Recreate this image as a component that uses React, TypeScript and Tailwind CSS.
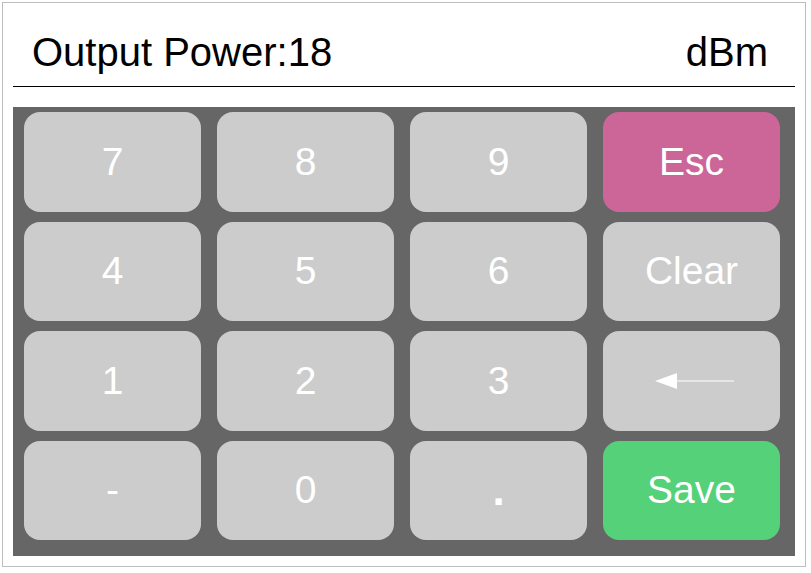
const keys: { label: string; tone?: 'esc' | 'save' | 'back' }[] = [
    { label: '7' },
    { label: '8' },
    { label: '9' },
    { label: 'Esc', tone: 'esc' },
    { label: '4' },
    { label: '5' },
    { label: '6' },
    { label: 'Clear' },
    { label: '1' },
    { label: '2' },
    { label: '3' },
    { label: '', tone: 'back' },
    { label: '-' },
    { label: '0' },
    { label: '.' },
    { label: 'Save', tone: 'save' },
];

const BackArrow = () => (
    <svg width="80" height="18" viewBox="0 0 80 18" className="ml-[6px]">
        <polygon points="0,9 22,1 22,17" fill="#ffffff" />
        <line x1="22" y1="9" x2="79" y2="9" stroke="#ffffff" strokeWidth="1.2" />
    </svg>
);

const App = () => {
    return (
        <div className="w-[811px] h-[573px] bg-white pl-[2px] pt-[2px] font-['Liberation_Sans',Arial,sans-serif]">
            <div className="w-[804px] h-[565px] border border-[#bdbdbd] flex flex-col">
                <div className="mx-[10px] pt-[29px] pb-[14px] pl-[19px] pr-[27px] border-b border-black flex justify-between text-[40px] leading-[40px] text-black">
                    <span>Output Power:18</span>
                    <span>dBm</span>
                </div>
                <div className="ml-[10px] mt-[20px] w-[782px] h-[449px] bg-[#666666] pl-[11px] pr-[15px] pt-[5px] pb-[16px] grid grid-cols-[177px_177px_177px_177px] grid-rows-4 gap-x-[16px] gap-y-[10px]">
                    {keys.map((k, i) => (
                        <div
                            key={i}
                            className={`rounded-[16px] flex items-center justify-center text-white ${k.label === '.' ? 'text-[44px] font-bold' : 'text-[39px]'} ${
                                k.tone === 'esc' ? 'bg-[#cc6699]' : k.tone === 'save' ? 'bg-[#54d179]' : 'bg-[#cccccc]'
                            }`}
                        >
                            {k.tone === 'back' ? <BackArrow /> : k.label}
                        </div>
                    ))}
                </div>
            </div>
        </div>
    );
};

export default App;
